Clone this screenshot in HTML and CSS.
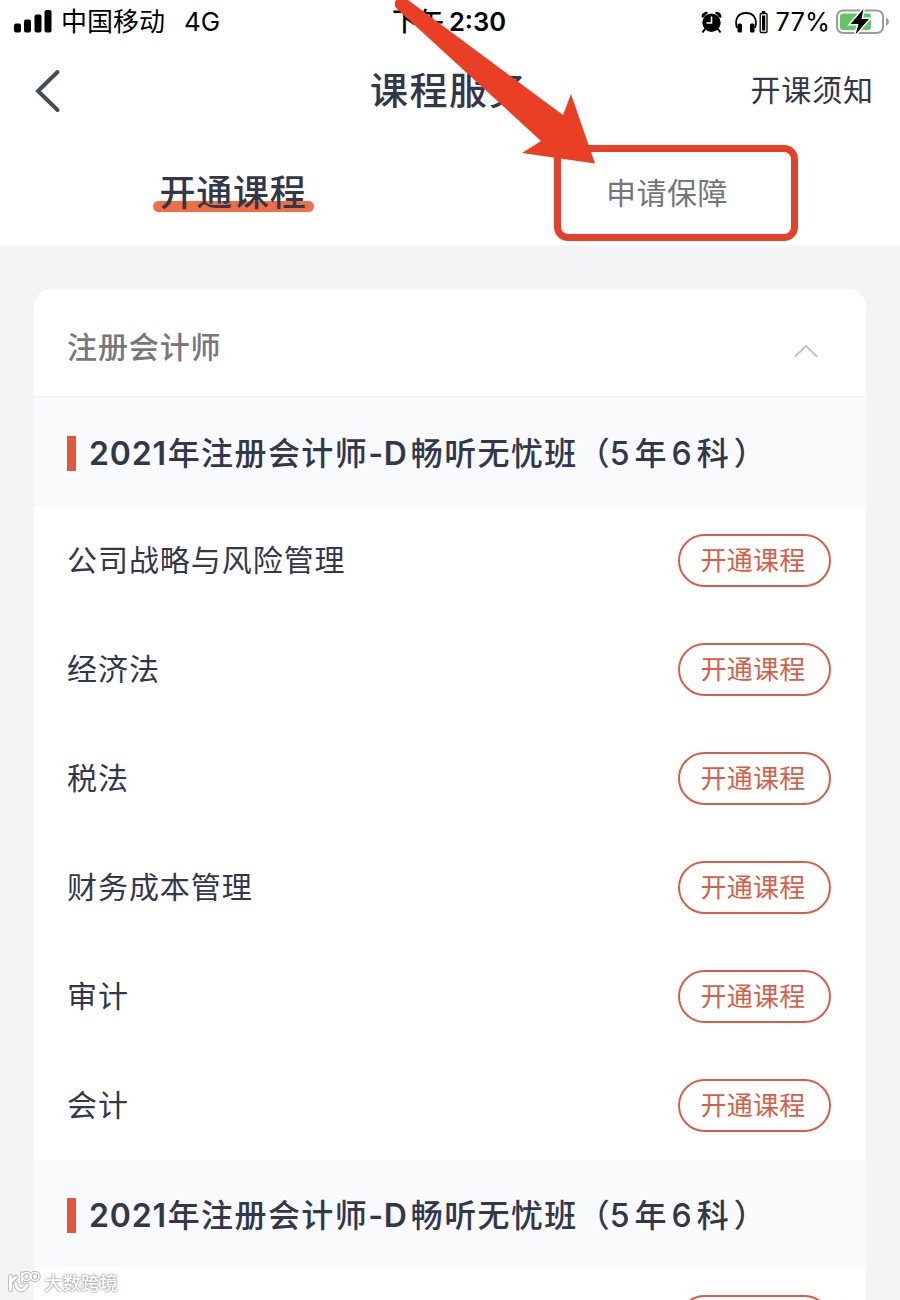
FILE: index.html
```html
<!DOCTYPE html>
<html lang="zh-CN">
<head>
<meta charset="UTF-8">
<meta name="viewport" content="width=device-width, initial-scale=1.0">
<title>课程服务</title>
<link rel="stylesheet" href="styles.css">
</head>
<body>
<div class="page">
    <div class="status-bar">
        <div class="status-left">
            <svg class="signal" width="38" height="24" viewBox="0 0 38 24">
                <rect x="0" y="13.5" width="7" height="9" rx="2"/>
                <rect x="10" y="9.5" width="7" height="13" rx="2"/>
                <rect x="20.5" y="4.5" width="7" height="18" rx="2"/>
                <rect x="30.5" y="0" width="7" height="22.5" rx="2"/>
            </svg>
            <span class="carrier">中国移动</span>
            <span class="network">4G</span>
        </div>
        <div class="status-time"><span class="ampm">下午</span><span class="clock">2:30</span></div>
        <div class="status-right">
            <svg class="alarm" width="21" height="23" viewBox="0 0 21 23">
                <path d="M0.5 6 Q0.5 1 6 0.8 L7 2 L1.8 7Z M20.5 6 Q20.5 1 15 0.8 L14 2 L19.2 7Z"/>
                <circle cx="10.5" cy="11.7" r="9.2"/>
                <path d="M4 18 L1.5 21.5 M17 18 L19.5 21.5" stroke="#000" stroke-width="2"/>
                <path d="M10.5 5.5 V12 H5.5" fill="none" stroke="#fff" stroke-width="1.6"/>
            </svg>
            <svg class="headphones" width="33" height="23" viewBox="0 0 33 23">
                <path d="M2 17 C-1 7 4 2 11 2 S23 7 20 17" fill="none" stroke="#000" stroke-width="1.8"/>
                <rect x="2.5" y="12.5" width="4.5" height="9" rx="1.5"/>
                <rect x="15" y="12.5" width="4.5" height="9" rx="1.5"/>
                <rect x="25.2" y="2.5" width="6.8" height="19" rx="1" fill="none" stroke="#000" stroke-width="1.3"/>
                <rect x="27" y="4.5" width="3.2" height="15"/>
                <rect x="27" y="0" width="3.2" height="2"/>
            </svg>
            <span class="percent">77%</span>
            <svg class="battery" width="54" height="28" viewBox="0 0 54 28">
                <rect x="1" y="2.5" width="46" height="22.5" rx="6" fill="#fff" stroke="#9b9b9b" stroke-width="2"/>
                <rect x="4" y="5.5" width="31" height="16.5" rx="3" fill="#62c466"/>
                <path d="M50 9.5 Q53 11 53 13.8 T50 18Z" fill="#9b9b9b"/>
                <path d="M27.5 1 L14.5 16 H22.5 L19.5 26.5 L33 11 H25.5Z" stroke="#fff" stroke-width="3" paint-order="stroke"/>
            </svg>
        </div>
    </div>

    <div class="nav-bar">
        <svg class="back" width="26" height="44" viewBox="0 0 26 44">
            <path d="M22.5 3 L3 22 L22.5 41" fill="none" stroke="#444c57" stroke-width="4" stroke-linecap="round"/>
        </svg>
        <h1 class="nav-title">课程服务</h1>
        <a class="nav-link">开课须知</a>
    </div>

    <div class="tabs">
        <div class="tab active"><span class="tab-text">开通课程</span></div>
        <div class="tab"><span class="tab-text">申请保障</span></div>
    </div>

    <div class="card">
        <div class="card-header">
            <span>注册会计师</span>
            <svg class="chevron" width="24" height="14" viewBox="0 0 24 14">
                <path d="M1.5 12 L12 2 L22.5 12" fill="none" stroke="#c4c4c6" stroke-width="2.2" stroke-linecap="round"/>
            </svg>
        </div>
        <div class="group-title first"><span class="digits">2021</span><span class="cjk">年注册会计师</span><span class="dash">-D</span><span class="cjk">畅听无忧班</span><span class="suffix"><span class="paren">（</span>5年6科<span class="paren">）</span></span></div>
        <div class="row"><span class="subject">公司战略与风险管理</span><button class="open-btn">开通课程</button></div>
        <div class="row"><span class="subject">经济法</span><button class="open-btn">开通课程</button></div>
        <div class="row"><span class="subject">税法</span><button class="open-btn">开通课程</button></div>
        <div class="row"><span class="subject">财务成本管理</span><button class="open-btn">开通课程</button></div>
        <div class="row"><span class="subject">审计</span><button class="open-btn">开通课程</button></div>
        <div class="row"><span class="subject">会计</span><button class="open-btn">开通课程</button></div>
        <div class="group-title"><span class="digits">2021</span><span class="cjk">年注册会计师</span><span class="dash">-D</span><span class="cjk">畅听无忧班</span><span class="suffix"><span class="paren">（</span>5年6科<span class="paren">）</span></span></div>
        <div class="row"><span class="subject"></span><button class="open-btn"></button></div>
    </div>

    <div class="highlight"></div>
    <svg class="arrow" width="210" height="170" viewBox="390 0 210 170">
        <path d="M396 0 H408 L563 115 L571 94 L595 163.5 L522 153 L541 141 L397 9 Q393 5 396 0Z" fill="#e93f24"/>
    </svg>

    <div class="watermark">
        <svg width="34" height="24" viewBox="0 0 34 24">
            <g fill="none" stroke-linecap="round" stroke-linejoin="round">
                <path class="wm-edge" d="M3.5 5 V19 M3.5 11 L9 6 M8.5 12 Q10 20 15 19 Q18 18 20 14"/>
                <path class="wm-edge thin" d="M15 2 V12"/>
                <circle class="wm-edge thin" cx="19.5" cy="5.5" r="4"/>
                <circle class="wm-edge thin" cx="28" cy="5.5" r="4"/>
                <path class="wm-line" d="M3.5 5 V19 M3.5 11 L9 6 M8.5 12 Q10 20 15 19 Q18 18 20 14"/>
                <path class="wm-line thin" d="M15 2 V12"/>
                <circle class="wm-line thin" cx="19.5" cy="5.5" r="4"/>
                <circle class="wm-line thin" cx="28" cy="5.5" r="4"/>
            </g>
        </svg>
        <span>大数跨境</span>
    </div>
</div>
</body>
</html>
```
FILE: styles.css
```css
* {
    box-sizing: border-box;
}
body {
    margin: 0;
    background-color: #f4f4f6;
    font-family: Inter, "Noto Sans CJK SC", sans-serif;
    color: #32374a;
}
.page {
    position: relative;
    width: 900px;
    height: 1300px;
    overflow: hidden;
}

/* status bar */
.status-bar {
    display: grid;
    grid-template-columns: 1fr auto 1fr;
    height: 44px;
    padding: 0 11px 2px 14px;
    background-color: #fff;
    color: #000;
    font-size: 25px;
    line-height: 44px;
}
.status-left,
.status-time,
.status-right {
    display: flex;
    align-items: center;
    white-space: nowrap;
}
.carrier {
    margin-left: 9px;
    font-size: 26px;
}
.network {
    margin-left: 19px;
    font-size: 26px;
}
.status-time {
    margin-left: -5px;
}
.ampm {
    font-size: 26px;
    font-weight: 500;
}
.clock {
    margin-left: 5px;
    font-size: 25.5px;
    font-weight: 600;
}
.status-right {
    justify-content: flex-end;
    margin-right: -1px;
}
.headphones {
    margin-left: 13px;
}
.percent {
    margin-left: 8px;
    font-size: 25.5px;
}
.battery {
    margin-left: 6px;
}

/* navigation */
.nav-bar {
    display: grid;
    grid-template-columns: 1fr auto 1fr;
    align-items: center;
    height: 94px;
    padding: 0 26px 0 35px;
    background-color: #fff;
}
.nav-title {
    margin: 0;
    padding: 0 11px 8px 0;
    font-size: 38px;
    font-weight: 500;
    letter-spacing: 1.5px;
}
.nav-link {
    justify-self: end;
    padding-bottom: 6px;
    font-size: 30px;
    letter-spacing: 0.9px;
}

.tabs {
    display: flex;
    height: 107px;
    padding: 0 16px;
    background-color: #fff;
}
.tab {
    flex: 1;
    text-align: center;
    font-size: 30px;
    line-height: 110px;
    letter-spacing: 0.5px;
    color: #747678;
}
.tab.active {
    font-size: 36px;
    font-weight: 500;
    color: #32374a;
}
.active .tab-text {
    display: inline-block;
    position: relative;
    z-index: 0;
    letter-spacing: 0.8px;
}
.active .tab-text::before {
    content: "";
    position: absolute;
    z-index: -1;
    left: -6px;
    right: -7px;
    top: 63px;
    height: 11px;
    border-radius: 6px;
    background-color: #ee6f47;
}

/* course card */
.card {
    margin: 44px 34px 0;
    border-radius: 18px;
    background-color: #fff;
}
.card-header {
    display: flex;
    align-items: center;
    justify-content: space-between;
    height: 107px;
    padding: 5px 48px 0 33px;
    font-size: 30px;
    font-weight: 500;
    letter-spacing: 0.9px;
    color: #77787a;
}
.chevron {
    margin-top: 12px;
}
.group-title {
    display: flex;
    align-items: center;
    height: 107px;
    padding: 4px 33px 0;
    background-color: #f9fafc;
    font-size: 32px;
    font-weight: 500;
    white-space: nowrap;
}
.group-title.first {
    height: 110px;
    border-top: 1px solid #f2f3f5;
}
.group-title::before {
    content: "";
    width: 9px;
    height: 35px;
    margin-right: 13px;
    background-color: #e6553b;
}
.digits,
.dash {
    font-weight: 600;
    letter-spacing: 0.8px;
}
.dash {
    margin-right: 2px;
}
.cjk {
    margin: 0 0 5px 1px;
    letter-spacing: 1.4px;
}
.suffix {
    margin-bottom: 5px;
    letter-spacing: 5px;
}
.paren {
    letter-spacing: 0;
}
.row {
    display: flex;
    align-items: center;
    justify-content: space-between;
    height: 109px;
    padding: 0 35px 1px 33px;
}
.subject {
    padding-bottom: 4px;
    font-size: 30px;
    letter-spacing: 0.95px;
}
.open-btn {
    width: 153px;
    height: 53px;
    padding: 0 3px 3px 0;
    border: 2px solid #d4604a;
    border-radius: 27px;
    background-color: #fff;
    color: #d4604a;
    font-family: inherit;
    font-size: 26px;
    letter-spacing: 0.3px;
}

/* marks drawn over the page */
.highlight {
    position: absolute;
    left: 554px;
    top: 145px;
    width: 244px;
    height: 96px;
    border: 7px solid #e4412a;
    border-radius: 14px;
}
.arrow {
    position: absolute;
    left: 390px;
    top: 0;
}
.watermark {
    position: absolute;
    left: 7px;
    top: 1269px;
    display: flex;
    align-items: center;
    gap: 3px;
    color: #fff;
    font-size: 18.5px;
    font-weight: 500;
    line-height: 28px;
    text-shadow: 0 0 2px #888, 0 0 2px #999;
}
.wm-edge {
    stroke: #b5b5b5;
    stroke-width: 4.6px;
}
.wm-line {
    stroke: #fff;
    stroke-width: 2.8px;
}
.wm-edge.thin {
    stroke-width: 3.4px;
}
.wm-line.thin {
    stroke-width: 1.6px;
}
```
